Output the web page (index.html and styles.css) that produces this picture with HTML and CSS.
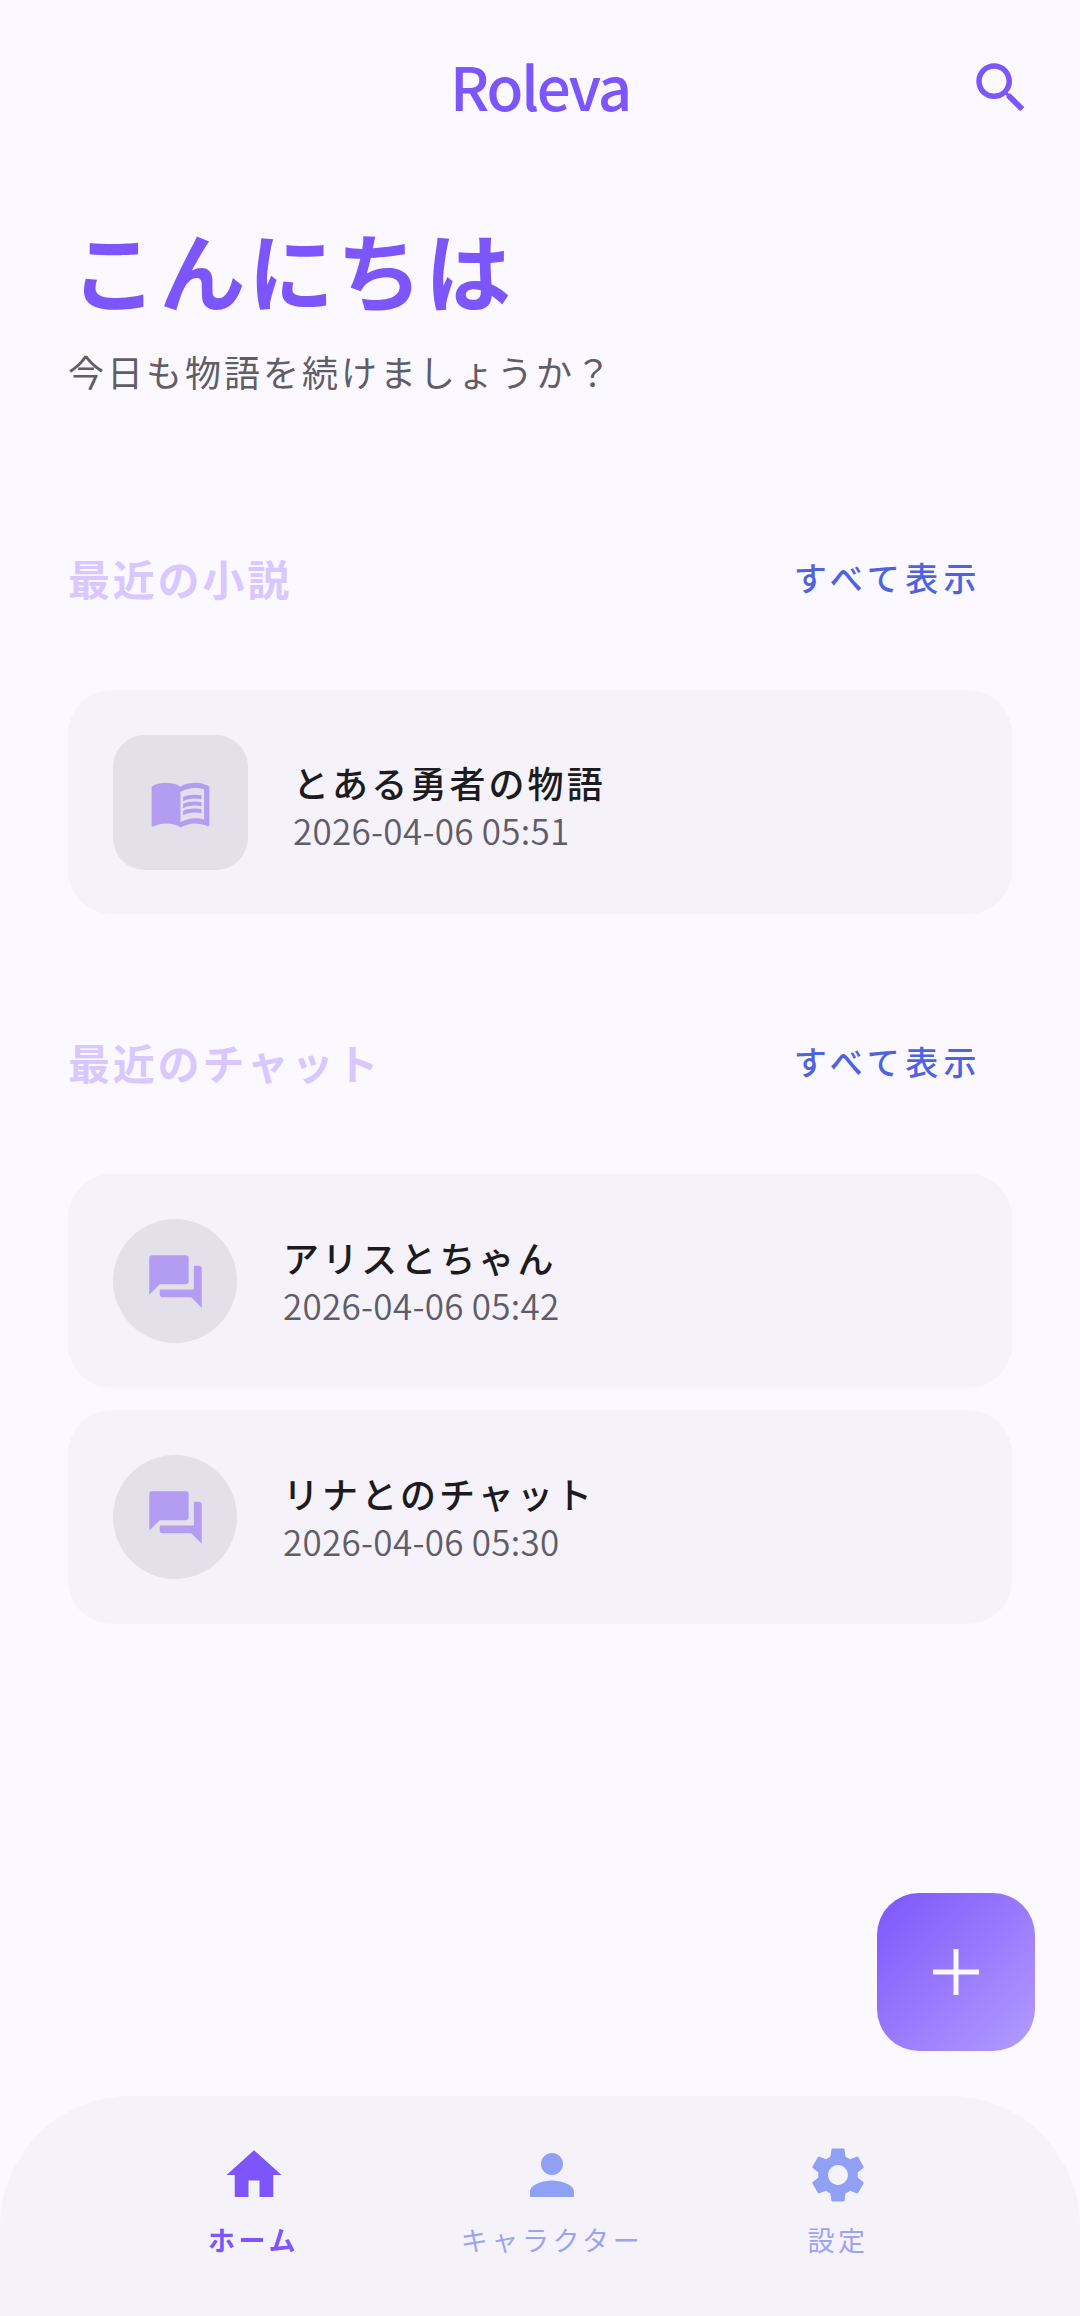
FILE: index.html
```html
<!DOCTYPE html>
<html lang="ja">
<head>
<meta charset="utf-8">
<title>Roleva</title>
<link rel="stylesheet" href="styles.css">
</head>
<body>
<div class="app">
  <header class="topbar">
    <div class="brand">Roleva</div>
    <svg class="search" viewBox="0 0 24 24"><path d="M15.5 14h-.79l-.28-.27C15.41 12.59 16 11.11 16 9.5 16 5.91 13.09 3 9.5 3S3 5.91 3 9.5 5.91 16 9.5 16c1.61 0 3.09-.59 4.23-1.57l.27.28v.79l5 4.99L20.49 19l-4.99-5zm-6 0C7.01 14 5 11.99 5 9.5S7.01 5 9.5 5 14 7.01 14 9.5 11.99 14 9.5 14z"/></svg>
  </header>
  <main class="content">
    <section class="greeting">
      <h1 class="hello">こんにちは</h1>
      <p class="sub">今日も物語を続けましょうか？</p>
    </section>
    <section class="section section-novels">
      <div class="section-head">
        <h2 class="section-title">最近の小説</h2>
        <span class="show-all">すべて表示</span>
      </div>
      <div class="card card-novel">
        <div class="thumb thumb-square">
          <svg class="thumb-icon" viewBox="0 0 24 24"><path d="M21 5c-1.11-.35-2.33-.5-3.5-.5-1.95 0-4.05.4-5.5 1.5-1.45-1.1-3.55-1.5-5.5-1.5S2.45 4.9 1 6v14.65c0 .25.25.5.5.5.1 0 .15-.05.25-.05C3.1 20.45 5.05 20 6.5 20c1.95 0 4.05.4 5.5 1.5 1.35-.85 3.8-1.5 5.5-1.5 1.65 0 3.35.3 4.75 1.05.1.05.15.05.25.05.25 0 .5-.25.5-.5V6c-.6-.45-1.25-.75-2-1zm0 13.5c-1.1-.35-2.3-.5-3.5-.5-1.7 0-4.15.65-5.5 1.5V8c1.35-.85 3.8-1.5 5.5-1.5 1.2 0 2.4.15 3.5.5v11.5z"/><path d="M17.5 10.5c.88 0 1.73.09 2.5.26V9.24c-.79-.15-1.64-.24-2.5-.24-1.7 0-3.24.29-4.5.83v1.66c1.13-.64 2.7-.99 4.5-.99zM13 12.49v1.66c1.13-.64 2.7-.99 4.5-.99.88 0 1.73.09 2.5.26V11.9c-.79-.15-1.64-.24-2.5-.24-1.7 0-3.24.3-4.5.83zM17.5 14.33c-1.7 0-3.24.29-4.5.83v1.66c1.13-.64 2.7-.99 4.5-.99.88 0 1.73.09 2.5.26v-1.52c-.79-.16-1.64-.24-2.5-.24z"/></svg>
        </div>
        <div class="card-text">
          <div class="card-title">とある勇者の物語</div>
          <div class="card-date">2026-04-06 05:51</div>
        </div>
      </div>
    </section>
    <section class="section section-chats">
      <div class="section-head">
        <h2 class="section-title">最近のチャット</h2>
        <span class="show-all">すべて表示</span>
      </div>
      <div class="chat-list">
        <div class="card card-chat">
          <div class="thumb thumb-round">
            <svg class="thumb-icon" viewBox="0 0 24 24"><path d="M21 6h-2v9H6v2c0 .55.45 1 1 1h11l4 4V7c0-.55-.45-1-1-1zm-4 6V3c0-.55-.45-1-1-1H3c-.55 0-1 .45-1 1v14l4-4h10c.55 0 1-.45 1-1z"/></svg>
          </div>
          <div class="card-text">
            <div class="card-title">アリスとちゃん</div>
            <div class="card-date">2026-04-06 05:42</div>
          </div>
        </div>
        <div class="card card-chat">
          <div class="thumb thumb-round">
            <svg class="thumb-icon" viewBox="0 0 24 24"><path d="M21 6h-2v9H6v2c0 .55.45 1 1 1h11l4 4V7c0-.55-.45-1-1-1zm-4 6V3c0-.55-.45-1-1-1H3c-.55 0-1 .45-1 1v14l4-4h10c.55 0 1-.45 1-1z"/></svg>
          </div>
          <div class="card-text">
            <div class="card-title">リナとのチャット</div>
            <div class="card-date">2026-04-06 05:30</div>
          </div>
        </div>
      </div>
    </section>
  </main>
  <button class="fab" type="button">
    <svg class="fab-icon" viewBox="0 0 48 48"><path d="M21.5 1h5v20.500h20.500v5H26.500v20.500h-5V26.500H1v-5h20.500z"/></svg>
  </button>
  <nav class="bottom-nav">
    <div class="nav-item active">
      <svg class="nav-icon" viewBox="0 0 24 24"><path d="M10 20v-6h4v6h5v-8h3L12 3 2 12h3v8z"/></svg>
      <span class="nav-label">ホーム</span>
    </div>
    <div class="nav-item">
      <svg class="nav-icon" viewBox="0 0 24 24"><path d="M12 12c2.21 0 4-1.79 4-4s-1.79-4-4-4-4 1.79-4 4 1.79 4 4 4zm0 2c-2.67 0-8 1.34-8 4v2h16v-2c0-2.66-5.33-4-8-4z"/></svg>
      <span class="nav-label">キャラクター</span>
    </div>
    <div class="nav-item">
      <svg class="nav-icon" viewBox="0 0 24 24"><path d="M19.14 12.94c.04-.3.06-.61.06-.94 0-.32-.02-.64-.07-.94l2.03-1.58c.18-.14.23-.41.12-.61l-1.92-3.32c-.12-.22-.37-.29-.59-.22l-2.39.96c-.5-.38-1.03-.7-1.62-.94l-.36-2.54c-.04-.24-.24-.41-.48-.41h-3.84c-.24 0-.43.17-.47.41l-.36 2.54c-.59.24-1.13.57-1.62.94l-2.39-.96c-.22-.08-.47 0-.59.22L2.74 8.87c-.12.21-.08.47.12.61l2.03 1.58c-.05.3-.09.63-.09.94s.02.64.07.94l-2.03 1.58c-.18.14-.23.41-.12.61l1.92 3.32c.12.22.37.29.59.22l2.39-.96c.5.38 1.03.7 1.62.94l.36 2.54c.05.24.24.41.48.41h3.84c.24 0 .44-.17.47-.41l.36-2.54c.59-.24 1.13-.56 1.62-.94l2.39.96c.22.08.47 0 .59-.22l1.92-3.32c.12-.22.07-.47-.12-.61l-2.01-1.58zM12 15.6c-1.98 0-3.6-1.62-3.6-3.6s1.62-3.6 3.6-3.6 3.6 1.62 3.6 3.6-1.62 3.6-3.6 3.6z"/></svg>
      <span class="nav-label">設定</span>
    </div>
  </nav>
</div>
</body>
</html>
```
FILE: styles.css
```css
* { box-sizing: border-box; }
html, body { margin: 0; padding: 0; }
body {
  background: #fbf9ff;
  font-family: "Noto Sans CJK JP", "Noto Sans", sans-serif;
}
.app {
  position: relative;
  width: 1080px;
  height: 2316px;
  display: flex;
  flex-direction: column;
  overflow: hidden;
}
.topbar {
  position: relative;
  height: 176px;
  padding-top: 51px;
  display: flex;
  justify-content: center;
}
.brand {
  font-size: 60px;
  line-height: 68px;
  font-weight: 500;
  letter-spacing: -2.2px;
  color: #7c56fb;
}
.search {
  position: absolute;
  left: 968px;
  top: 55px;
  width: 66px;
  height: 66px;
  fill: #7c56fb;
}
.content {
  flex: 1;
  padding: 0 68px;
  display: flex;
  flex-direction: column;
}
.hello {
  margin: 48px 0 0 3px;
  font-size: 86px;
  line-height: 90px;
  font-weight: 700;
  letter-spacing: 2.5px;
  color: #7c56fb;
}
.sub {
  margin: 34px 0 0 0;
  font-size: 36px;
  line-height: 46px;
  font-weight: 400;
  letter-spacing: 3px;
  color: #5f5d68;
}
.section { display: flex; flex-direction: column; }
.section-novels { margin-top: 151px; }
.section-chats { margin-top: 115px; }
.section-head {
  height: 64px;
  display: flex;
  align-items: center;
  justify-content: space-between;
  padding-right: 30px;
  margin-bottom: 81px;
}
.section-title {
  margin: 0;
  font-size: 42px;
  font-weight: 700;
  letter-spacing: 2.8px;
  color: #d9c7ff;
}
.show-all {
  font-size: 33px;
  font-weight: 500;
  letter-spacing: 5.4px;
  color: #4e63e0;
}
.card {
  display: flex;
  align-items: center;
  background: #f5f2fa;
  border-radius: 44px;
  padding: 0 45px;
}
.card-novel { height: 224px; gap: 45px; }
.card-chat { height: 214px; gap: 46px; }
.chat-list { display: flex; flex-direction: column; gap: 22px; }
.thumb {
  display: flex;
  align-items: center;
  justify-content: center;
  background: #e3e0e9;
  flex: none;
}
.thumb-square { width: 135px; height: 135px; border-radius: 32px; }
.thumb-round { width: 124px; height: 124px; border-radius: 50%; }
.thumb-icon { width: 63px; height: 63px; fill: #b39df3; }
.card-text { display: flex; flex-direction: column; }
.card-novel .card-text { padding-top: 8px; }
.card-title {
  font-size: 36px;
  line-height: 48px;
  font-weight: 500;
  letter-spacing: 3.1px;
  color: #1c1b20;
}
.card-date {
  margin-top: 0;
  font-size: 35px;
  line-height: 48px;
  font-weight: 350;
  letter-spacing: 0.3px;
  color: #5f5d68;
}
.fab {
  position: absolute;
  left: 877px;
  top: 1893px;
  width: 158px;
  height: 158px;
  padding: 0;
  border: 0;
  border-radius: 42px;
  background: linear-gradient(135deg, #7c56fb, #b59cff);
  display: flex;
  align-items: center;
  justify-content: center;
}
.fab-icon { width: 48px; height: 48px; fill: #fbf9ff; }
.bottom-nav {
  height: 220px;
  background: #f5f2fa;
  border-radius: 130px 130px 0 0;
  padding: 46px 209px 0 208px;
  display: flex;
  justify-content: space-between;
}
.nav-item {
  display: flex;
  flex-direction: column;
  align-items: center;
  color: #9aa5ee;
}
.nav-icon { width: 66px; height: 66px; fill: #8fa0f5; }
.nav-label {
  margin-top: 14px;
  font-size: 27px;
  line-height: 36px;
  letter-spacing: 3.6px;
}
.nav-item.active { color: #7c56fb; }
.nav-item.active .nav-icon { fill: #7c56fb; }
.nav-item.active .nav-label { font-weight: 700; }
```
